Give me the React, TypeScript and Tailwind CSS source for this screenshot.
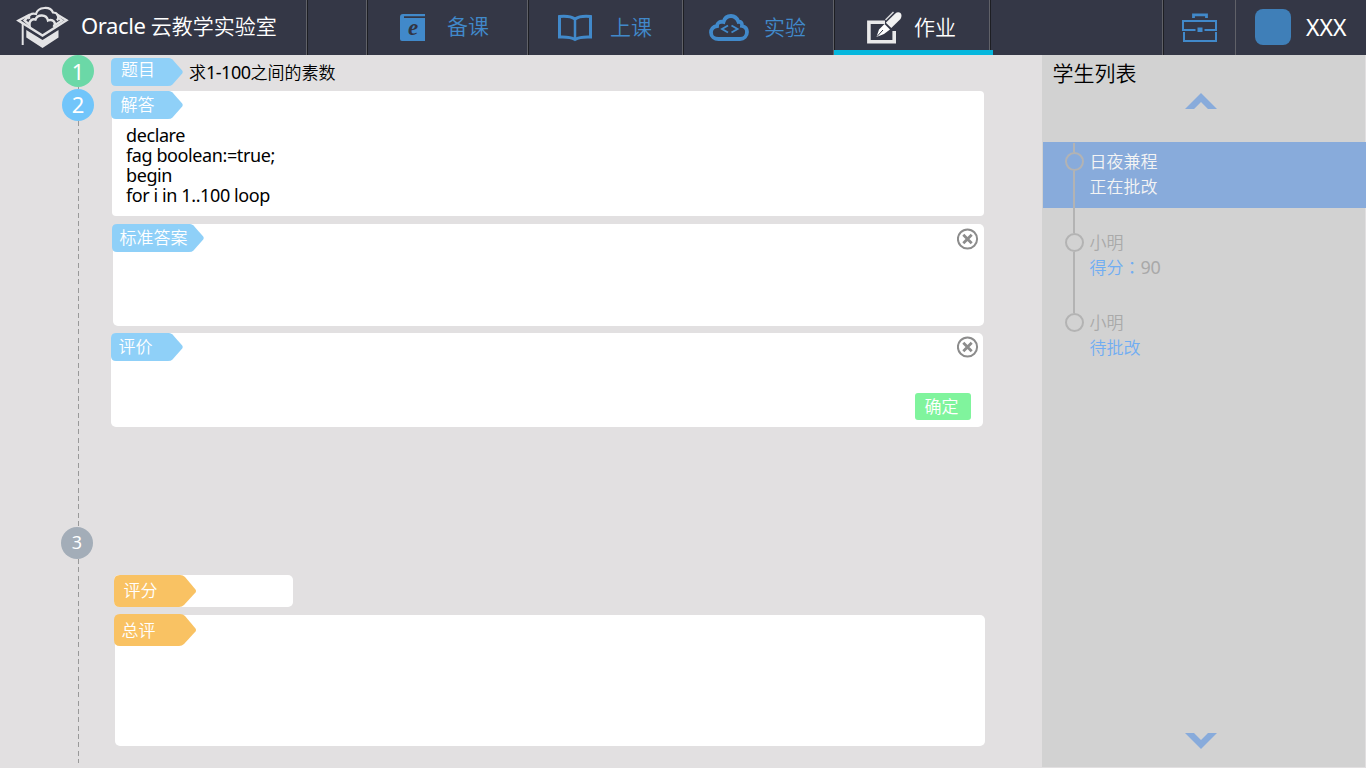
import type { ReactNode } from "react";

function Tag({ children, className = "", wide = 72 }: { children: ReactNode; className?: string; wide?: number }) {
  return (
    <div className={`relative h-7 shrink-0 text-[17px] text-white ${className}`} style={{ width: wide }}>
      <svg className="absolute inset-0" width={wide} height="28" fill="#8fd0f8">
        <path d={`M5 0H${wide - 14}Q${wide - 12} 0 ${wide - 10.5} 1.5L${wide - 0.8} 12.5Q${wide + 0.2} 14 ${wide - 0.8} 15.5L${wide - 10.5} 26.5Q${wide - 12} 28 ${wide - 15} 28H5Q0 28 0 23V5Q0 0 5 0Z`} />
      </svg>
      <span className="relative whitespace-nowrap">{children}</span>
    </div>
  );
}

function OrangeTag({ children, className = "" }: { children: ReactNode; className?: string }) {
  return (
    <div className={`relative h-8 w-[82px] shrink-0 text-[17px] text-white ${className}`}>
      <svg className="absolute inset-0" width="82" height="32" fill="#f9c263">
        <path d="M6 0H66Q69 0 71 2L81.500 14.500Q82.500 16 81.500 17.500L70 30Q68 32 65 32H6Q0 32 0 26V6Q0 0 6 0Z" />
      </svg>
      <span className="relative">{children}</span>
    </div>
  );
}

function CloseIcon() {
  return (
    <svg width="22" height="22" viewBox="0 0 22 22" fill="none" stroke="#8c8c8c">
      <circle cx="10.500" cy="11" r="9.600" strokeWidth="2" />
      <path d="M6.300 6.800L14.700 15.200M14.700 6.800L6.300 15.200" strokeWidth="2.800" />
    </svg>
  );
}

function Logo() {
  return (
    <svg width="54" height="43" viewBox="0 0 54 43" fill="none" stroke="#e3e3e5">
      <path d="M14 8.500L2.500 14.500L26.500 29.500L50.500 14.300L41 8.500" strokeWidth="2.400" />
      <path d="M6.700 17V39" strokeWidth="2" />
      <path d="M13.500 13C11.500 9.500 15.500 6.500 20 8C22 0.500 34.500 0 37 6.500C42 6.500 43.500 11 41 14.500M42 11.500L46 14.500L39 19" strokeWidth="2.200" />
      <path d="M13 10L8.500 14.500L13.500 19C13 14.500 16.500 12.500 19.500 13.500C21.500 8 30.500 8 32 14.500C37 12.500 41 17 37.500 21" strokeWidth="2.400" />
      <path d="M10.300 24L26.500 34L42.500 24V31.500L26.500 42L10.300 31.500Z" fill="#e3e3e5" stroke="none" />
    </svg>
  );
}

function EBookIcon() {
  return (
    <svg width="26" height="28" viewBox="0 0 26 28">
      <path d="M3 0H25V2.200H4V4H25V27H2Q0 27 0 25V3Q0 0 3 0Z" fill="#4189ca" />
      <text x="13" y="21" textAnchor="middle" fontFamily="Liberation Serif, serif" fontStyle="italic" fontWeight="700" fontSize="23" fill="#323544">e</text>
    </svg>
  );
}

function BookIcon() {
  return (
    <svg width="34" height="28" viewBox="0 0 34 28" fill="none" stroke="#4189ca">
      <path d="M1.500 2.500Q12 1.500 17 5Q22 1.500 32.500 2.500V23Q22 22.500 17 25.500Q12 22.500 1.500 23Z" strokeWidth="3" />
      <path d="M17 5V26" strokeWidth="2.500" />
    </svg>
  );
}

function CloudIcon() {
  return (
    <svg width="40" height="28" viewBox="0 0 40 28" fill="none" stroke="#4189ca">
      <path d="M9.500 25H31C35 25 38 22 38 18C38 14.500 35.500 12.500 33 12C33.500 9 31.500 7.500 29.500 7.800C28 4 25.500 2 22 2C18 2 15.500 4.500 14.500 8C11 7 8 9 8 12C4 12.500 2 15.500 2 18.500C2 22.500 5.500 25 9.500 25Z" strokeWidth="3.800" />
      <path d="M19 11.500L13 15L19 18.500M22.500 11.500L28.500 15L22.500 18.500" strokeWidth="1.900" />
    </svg>
  );
}

function EditIcon() {
  return (
    <svg width="36" height="34" viewBox="0 0 36 34">
      <path d="M18 11.200H1.900V30.700H27.200V20" fill="none" stroke="#e9e9ea" strokeWidth="3.600" />
      <path d="M9.500 26L12 18.500L17.500 13L23 18.500L17 23Z" fill="#fff" />
      <path d="M10 25.500L16 19" stroke="#323544" strokeWidth="1" />
      <path d="M18.800 11.800L28 2.700Q31 0.300 33.500 2Q35.500 4.500 33.500 8L24.300 17Z" fill="#f2f2f2" />
      <path d="M18.500 9L26.500 1" stroke="#dcdcde" strokeWidth="1.500" />
    </svg>
  );
}

function BriefcaseIcon() {
  return (
    <svg width="36" height="30" viewBox="0 0 36 30" fill="none" stroke="#4189ca" strokeWidth="2">
      <path d="M11.500 5V1.800H24.500V5" strokeWidth="2.800" />
      <path d="M13.500 17H1V8H34V17H22.500M2 19V28H34V19" />
      <rect x="15.500" y="14.500" width="5" height="4.500" fill="#4189ca" stroke="none" />
    </svg>
  );
}

const cell = "flex h-full shrink-0 items-center border-l border-r border-l-[#1d1e23] border-r-[#606168]";

function Step({ n, className }: { n: number; className: string }) {
  return <div className={`flex size-8 shrink-0 items-center justify-center rounded-full leading-none font-normal text-white ${className}`}>{n}</div>;
}

const dash = "ml-[17px] w-px bg-[repeating-linear-gradient(to_bottom,#999_0,#999_5px,transparent_5px,transparent_8.330px)]";

function Rail({ top, bottom }: { top: string; bottom: string }) {
  return (
    <div className="flex w-[19px] shrink-0 flex-col items-center">
      <div className={`mr-px w-0.5 shrink-0 bg-[#b3b3b3] ${top}`} />
      <div className="size-[19px] shrink-0 rounded-full border-2 border-[#b3b3b3]" />
      <div className={`mr-px w-0.5 shrink-0 bg-[#b3b3b3] ${bottom}`} />
    </div>
  );
}

export default function App() {
  return (
    <div className="flex h-[768px] w-[1366px] flex-col overflow-hidden bg-[#e2e0e1] font-['Noto_Sans','Noto_Sans_CJK_SC',sans-serif] font-[350] text-black">
      <header className="flex h-[55px] shrink-0 bg-[#343746] text-[21px] leading-none text-[#4189ca]">
        <div className="flex h-full w-[307px] shrink-0 items-center border-r border-[#606168] pl-4 text-white">
          <Logo />
          <span className="ml-[11px] pb-1 whitespace-nowrap"><span className="text-[22px] font-normal tracking-[-0.4px]">Oracle </span>云教学实验室</span>
        </div>
        <div className={`${cell} w-[60px]`} />
        <div className={`${cell} w-[161px] gap-[21px] pl-8`}>
          <EBookIcon />
          <span className="pb-0.5">备课</span>
        </div>
        <div className={`${cell} w-[155px] gap-[18px] pl-[29px]`}>
          <BookIcon />
          <span>上课</span>
        </div>
        <div className={`${cell} w-[151px] gap-[15px] pl-[25px]`}>
          <CloudIcon />
          <span>实验</span>
        </div>
        <div className="relative h-full w-[156px] shrink-0 border-x border-l-[#1d1e23] border-r-[#606168] text-white">
          <div className="flex h-full items-center gap-[11px] pl-8">
            <EditIcon />
            <span>作业</span>
          </div>
          <div className="absolute bottom-0 -left-px h-[5px] w-[159px] bg-[#06b7dd]" />
        </div>
        <div className="w-[173px] shrink-0 border-r border-l border-r-[#606168] border-l-[#1d1e23]" />
        <div className={`${cell} w-[73px] pl-[18px]`}>
          <BriefcaseIcon />
        </div>
        <div className="flex items-center pl-[19px] text-white">
          <div className="mb-0.5 size-9 rounded-[8px] bg-[#3f7fb8]" />
          <span className="ml-[15px] text-[23px] font-normal">XXX</span>
        </div>
      </header>

      <div className="flex min-h-0 flex-1">
        <div className="box-content flex w-[50px] shrink-0 flex-col pl-[61px]">
          <Step n={1} className="ml-px bg-[#6bd8a7] pb-px text-[22px]" />
          <div className={`${dash} h-0.5`} />
          <Step n={2} className="ml-px bg-[#71c5fa] pb-[3px] text-[22px]" />
          <div className={`${dash} h-[406px]`} />
          <Step n={3} className="bg-[#a3adb8] pb-0.5 text-[18px]" />
          <div className={`${dash} h-[204px]`} />
        </div>

        <main className="flex w-[931px] shrink-0 flex-col pt-[3px]">
          <div className="flex h-7">
            <Tag className="pl-[10px] leading-6">题目</Tag>
            <span className="ml-1.5 text-[17px] leading-7">求<span className="text-[18px] font-normal tracking-[-0.5px]">1-100</span>之间的素数</span>
          </div>
          <section className="mt-[5px] ml-px h-[125px] w-[872px] rounded-[4px] bg-white">
            <Tag className="-ml-px pl-[9.500px] leading-7">解答</Tag>
            <pre className="pt-1.5 pl-[14px] font-[inherit] text-[18px] leading-5 font-normal tracking-[-0.4px]">{"declare\nfag boolean:=true;\nbegin\nfor i in 1..100 loop"}</pre>
          </section>
          <section className="mt-2 ml-0.5 flex h-[102px] w-[871px] justify-between rounded-[5px] bg-white pr-[5px]">
            <Tag wide={92} className="-ml-px pl-[7.500px] leading-7">标准答案</Tag>
            <button className="mt-1 size-[22px]"><CloseIcon /></button>
          </section>
          <section className="mt-[7px] flex h-[94px] w-[872px] flex-col rounded-[5px] bg-white">
            <div className="flex justify-between pr-1">
              <Tag className="pl-[7.500px] leading-7">评价</Tag>
              <button className="mt-[3px] size-[22px]"><CloseIcon /></button>
            </div>
            <button className="mt-8 mr-3 h-[27px] w-14 self-end rounded-[3px] bg-[#80f49d] pr-[3px] text-[17px] leading-[27px] text-white">确定</button>
          </section>
          <section className="mt-[148px] ml-[3px] h-8 w-[179px] rounded-[5px] bg-white">
            <OrangeTag className="pl-[9.500px] leading-8">评分</OrangeTag>
          </section>
          <section className="mt-2 ml-1 h-[131px] w-[870px] rounded-[5px] bg-white">
            <OrangeTag className="-mt-px -ml-px pl-[7.500px] leading-[33px]">总评</OrangeTag>
          </section>
        </main>

        <aside className="flex h-[712px] w-[323px] shrink-0 flex-col bg-[#d2d2d2]">
          <h2 className="h-[38px] pl-[10.500px] text-[21px] leading-[37px]">学生列表</h2>
          <svg className="ml-[143px] shrink-0" width="32" height="16" fill="#88abdb"><path d="M16 0L32 16H23L16 9L9 16H0Z" /></svg>
          <ul className="mt-[33px] -mr-px ml-px text-[17px] leading-[25px]">
            <li className="flex h-[66px] gap-[5.500px] bg-[#88abdb] pl-[22px] text-[#f4f4f4]">
              <Rail top="mt-px h-[9px]" bottom="h-[37px]" />
              <div className="pt-[7px]"><p>日夜兼程</p><p>正在批改</p></div>
            </li>
            <li className="flex h-[81px] gap-[5.500px] pl-[22px] text-[#a9a9a9]">
              <Rail top="h-[25px]" bottom="h-[37px]" />
              <div className="pt-[22px]"><p>小明</p><p><span className="text-[#70adf3]">得分<span className="font-['Noto_Sans_CJK_TC',sans-serif] leading-none">：</span></span><span className="text-[18px] leading-none font-normal tracking-[-0.4px]">90</span></p></div>
            </li>
            <li className="flex h-[81px] gap-[5.500px] pl-[22px] text-[#a9a9a9]">
              <Rail top="h-6" bottom="h-0" />
              <div className="pt-[21px]"><p>小明</p><p className="text-[#70adf3]">待批改</p></div>
            </li>
          </ul>
          <svg className="mt-auto mb-[18px] ml-[143px] shrink-0" width="32" height="16" fill="#88abdb"><path d="M16 16L32 0H23L16 7L9 0H0Z" /></svg>
        </aside>
      </div>
    </div>
  );
}
